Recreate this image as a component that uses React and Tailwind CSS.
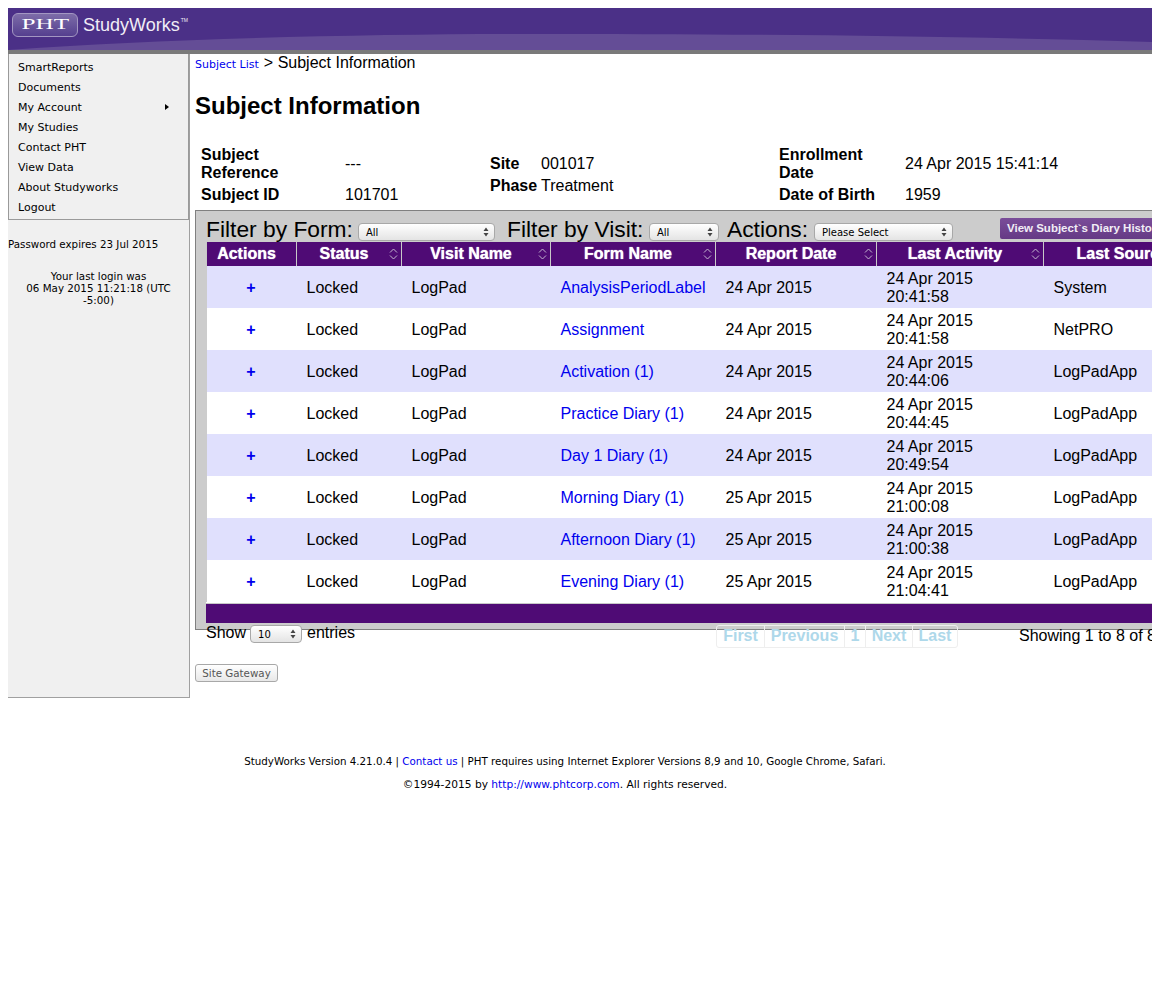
import React from 'react';

const rows = [
  ['AnalysisPeriodLabel', '24 Apr 2015', '24 Apr 2015', '20:41:58', 'System'],
  ['Assignment', '24 Apr 2015', '24 Apr 2015', '20:41:58', 'NetPRO'],
  ['Activation (1)', '24 Apr 2015', '24 Apr 2015', '20:44:06', 'LogPadApp'],
  ['Practice Diary (1)', '24 Apr 2015', '24 Apr 2015', '20:44:45', 'LogPadApp'],
  ['Day 1 Diary (1)', '24 Apr 2015', '24 Apr 2015', '20:49:54', 'LogPadApp'],
  ['Morning Diary (1)', '25 Apr 2015', '24 Apr 2015', '21:00:08', 'LogPadApp'],
  ['Afternoon Diary (1)', '25 Apr 2015', '24 Apr 2015', '21:00:38', 'LogPadApp'],
  ['Evening Diary (1)', '25 Apr 2015', '24 Apr 2015', '21:04:41', 'LogPadApp'],
];

const menu = ['SmartReports', 'Documents', 'My Account', 'My Studies', 'Contact PHT', 'View Data', 'About Studyworks', 'Logout'];

const columns = [
  { label: 'Actions', w: 'w-[90px]' },
  { label: 'Status', w: 'w-[105px]', sort: true },
  { label: 'Visit Name', w: 'w-[149px]', sort: true },
  { label: 'Form Name', w: 'w-[165px]', sort: true },
  { label: 'Report Date', w: 'w-[161px]', sort: true },
  { label: 'Last Activity', w: 'w-[167px]', sort: true },
  { label: 'Last Source', w: 'w-[167px]', sort: true },
];

const pages = [
  { label: 'First', w: 'w-[47px]' },
  { label: 'Previous', w: 'w-[80px]' },
  { label: '1', w: 'w-[21px]' },
  { label: 'Next', w: 'w-[47px]' },
  { label: 'Last', w: 'w-[45px]' },
];

const SelectBox = ({ label, className }) => (
  <div className={`flex h-[18px] shrink-0 items-center justify-between rounded-[4px] border border-[#a8a8a8] bg-gradient-to-b from-white to-[#e4e4e4] pl-[7px] pr-[5px] font-['DejaVu_Sans',sans-serif] text-[10px] text-black ${className}`}>
    <span className="pt-px">{label}</span>
    <svg width="6" height="10" viewBox="0 0 6 10" className="fill-[#444]">
      <path d="M3 0.5 L5.5 4 H0.5 Z M3 9.5 L0.5 6 H5.5 Z" />
    </svg>
  </div>
);

const SortIcon = () => (
  <svg width="9" height="12" viewBox="0 0 9 12" fill="none" className="absolute right-[3px] top-[6px] stroke-[#c4b8d0]">
    <path d="M1 4.5 L4.5 1 L8 4.5 M1 7.5 L4.5 11 L8 7.5" />
  </svg>
);

export default function App() {
  return (
    <div className="h-[986px] w-[1152px] overflow-hidden bg-white pl-2 pt-2 font-['Liberation_Sans',Arial,sans-serif] text-black">
      {/* Header */}
      <div className="relative h-[46px] w-[1144px] overflow-hidden border-b-[4px] border-[#7a7a7a] bg-[#4b3087]">
        <svg width="1144" height="42" viewBox="0 0 1144 42" className="absolute left-0 top-0">
          <path d="M0 42 C 150 31, 350 26, 512 26 C 750 26, 950 28, 1144 34 V42 Z" fill="#644d96" />
        </svg>
        <div className="relative flex items-center pl-[4px] pt-[5px]">
          <div className="flex h-[24px] w-[66px] items-center justify-center rounded-[6px] border border-[#a397c2] bg-gradient-to-b from-[#7d6ca8] to-[#553f8f] font-['Liberation_Serif',serif] text-[14px] leading-none text-white">
            <span className="scale-x-[1.8]">PHT</span>
          </div>
          <span className="ml-[5px] text-[18px] leading-[24px] text-[#f0edf6]">StudyWorks</span>
          <span className="-mt-[10px] ml-px text-[5px] leading-none text-[#f0edf6]">TM</span>
        </div>
      </div>

      <div className="flex items-start">
        {/* Sidebar */}
        <div className="h-[644px] w-[182px] shrink-0 border-r border-b border-[#a0a0a0] bg-[#f0f0f0] font-['DejaVu_Sans',sans-serif] text-[11px] leading-[13px]">
          <ul className="h-[166px] w-[181px] border border-t-0 border-[#9a9a9a] pt-[3px]">
            {menu.map((item) => (
              <li key={item} className="relative flex h-[20px] items-center pl-[9px]">
                {item}
                {item === 'My Account' && (
                  <span className="absolute left-[156px] top-[7px] h-0 w-0 border-y-[3.5px] border-l-[4px] border-y-transparent border-l-black" />
                )}
              </li>
            ))}
          </ul>
          <p className="mt-[18px] text-[10.3px]">Password expires 23 Jul 2015</p>
          <p className="mx-auto mt-[19px] w-[160px] text-center text-[10.3px] leading-[12px]">
            Your last login was
            <br />
            06 May 2015 11:21:18 (UTC -5:00)
          </p>
        </div>

        {/* Main */}
        <div className="w-[1100px] shrink-0 pl-[5px]">
          <div className="flex h-[19px] items-baseline text-[16px] leading-[18px]">
            <a className="font-['DejaVu_Sans',sans-serif] text-[11px] text-[#0000ee]">Subject List</a>
            <span className="ml-[5px]">&gt; Subject Information</span>
          </div>
          <h1 className="mt-[18px] text-[24px] font-bold leading-[30px]">Subject Information</h1>

          {/* Subject summary */}
          <div className="mt-[25px] flex h-[64px] text-[16px] leading-[18px]">
            <div className="grid w-[295px] grid-cols-[144px_1fr] content-start gap-y-[4px] pl-[6px]">
              <div className="w-[100px] font-bold">Subject Reference</div>
              <div className="flex items-center">---</div>
              <div className="font-bold">Subject ID</div>
              <div>101701</div>
            </div>
            <div className="grid w-[289px] grid-cols-[51px_1fr] content-start gap-y-[4px] pt-[9px]">
              <div className="font-bold">Site</div>
              <div>001017</div>
              <div className="font-bold">Phase</div>
              <div>Treatment</div>
            </div>
            <div className="grid grid-cols-[126px_1fr] content-start gap-y-[4px]">
              <div className="w-[100px] font-bold">Enrollment Date</div>
              <div className="flex items-center">24 Apr 2015 15:41:14</div>
              <div className="font-bold">Date of Birth</div>
              <div>1959</div>
            </div>
          </div>

          {/* Table panel */}
          <div className="h-[420px] w-[1095px] border border-[#808080] bg-[#cccccc] pl-[10px]">
            <div className="flex h-[31px] items-start text-[22.8px] leading-[26px]">
              <span className="mt-[5px] w-[152px] shrink-0">Filter by Form:</span>
              <SelectBox label="All" className="mt-[12px] w-[137px]" />
              <span className="ml-[12px] mt-[5px] w-[142px] shrink-0">Filter by Visit:</span>
              <SelectBox label="All" className="mt-[12px] w-[70px]" />
              <span className="ml-[8px] mt-[5px] w-[87px] shrink-0">Actions:</span>
              <SelectBox label="Please Select" className="mt-[12px] w-[139px]" />
              <button className="ml-[47px] mt-[7px] h-[21px] w-[180px] shrink-0 rounded-[2px] bg-gradient-to-b from-[#7a4d99] to-[#653a85] pl-[7px] text-left text-[11.5px] font-bold leading-[21px] text-[#f2eef6]">
                View Subject`s Diary History
              </button>
            </div>

            <table className="w-[1004px] table-fixed border-collapse text-[16px] leading-[18px]">
              <thead>
                <tr className="h-[24px] bg-[#4f0b75] text-white">
                  {columns.map((col) => (
                    <th key={col.label} className={`relative border-l border-[#c8c8c8] pr-[10px] text-center font-bold [text-shadow:0_0_1px_#fff] ${col.w}`}>
                      {col.label}
                      {col.sort && <SortIcon />}
                    </th>
                  ))}
                </tr>
              </thead>
              <tbody>
                {rows.map((row, i) => (
                  <tr key={row[0]} className={`h-[42px] ${i % 2 === 0 ? 'bg-[#e0e0fd]' : 'bg-white'}`}>
                    <td className="pr-[1px] pt-[2px] text-center font-bold text-[#0000ee]">+</td>
                    <td className="pl-[10px] pt-[2px]">Locked</td>
                    <td className="pl-[10px] pt-[2px]">LogPad</td>
                    <td className="pl-[10px] pt-[2px] text-[#0000ee]">{row[0]}</td>
                    <td className="pl-[10px] pt-[2px]">{row[1]}</td>
                    <td className="pl-[10px] pt-[2px]">{row[2]}<br />{row[3]}</td>
                    <td className="pl-[10px] pt-[2px]">{row[4]}</td>
                  </tr>
                ))}
              </tbody>
            </table>
            <div className="h-px w-[1004px] bg-white" />
            <div className="h-[20px] w-[1004px] border-t border-[#c8c8c8] bg-[#4f0b75]" />
          </div>

          {/* Below the panel */}
          <div className="-mt-[5px] flex h-[23px] items-start text-[16px] leading-[18px]">
            <div className="flex w-[521px] shrink-0 items-start pl-[11px]">
              <span className="-mt-px">Show</span>
              <SelectBox label="10" className="ml-[4px] w-[52px]" />
              <span className="-mt-px ml-[5px]">entries</span>
            </div>
            <div className="flex h-[23px] shrink-0 rounded-[3px] border border-[#eeeeee] font-bold text-[#aed8ea]">
              {pages.map((p, i) => (
                <span key={p.label} className={`flex items-center justify-center pb-px leading-[20px] ${p.w} ${i > 0 ? 'border-l border-[#eeeeee]' : ''}`}>
                  {p.label}
                </span>
              ))}
            </div>
            <span className="ml-[61px] mt-[2px] shrink-0">Showing 1 to 8 of 8 entries</span>
          </div>

          <button className="mt-[16px] block h-[18px] w-[83px] rounded-[3px] border border-[#a8a8a8] bg-gradient-to-b from-white to-[#e8e8e8] text-center font-['DejaVu_Sans',sans-serif] text-[10.3px] leading-[16px] text-[#555555]">
            Site Gateway
          </button>
        </div>
      </div>

      {/* Footer */}
      <div className="mt-[56px] w-[1114px] text-center font-['DejaVu_Sans',sans-serif] text-[10.3px] leading-[14px]">
        <p>
          StudyWorks Version 4.21.0.4 | <a className="text-[#0000ee]">Contact us</a> | PHT requires using Internet Explorer Versions 8,9 and 10, Google Chrome, Safari.
        </p>
        <p className="mt-[10px] text-[10.65px]">
          ©1994-2015 by <a className="text-[#0000ee]">http://www.phtcorp.com</a>. All rights reserved.
        </p>
      </div>
    </div>
  );
}
